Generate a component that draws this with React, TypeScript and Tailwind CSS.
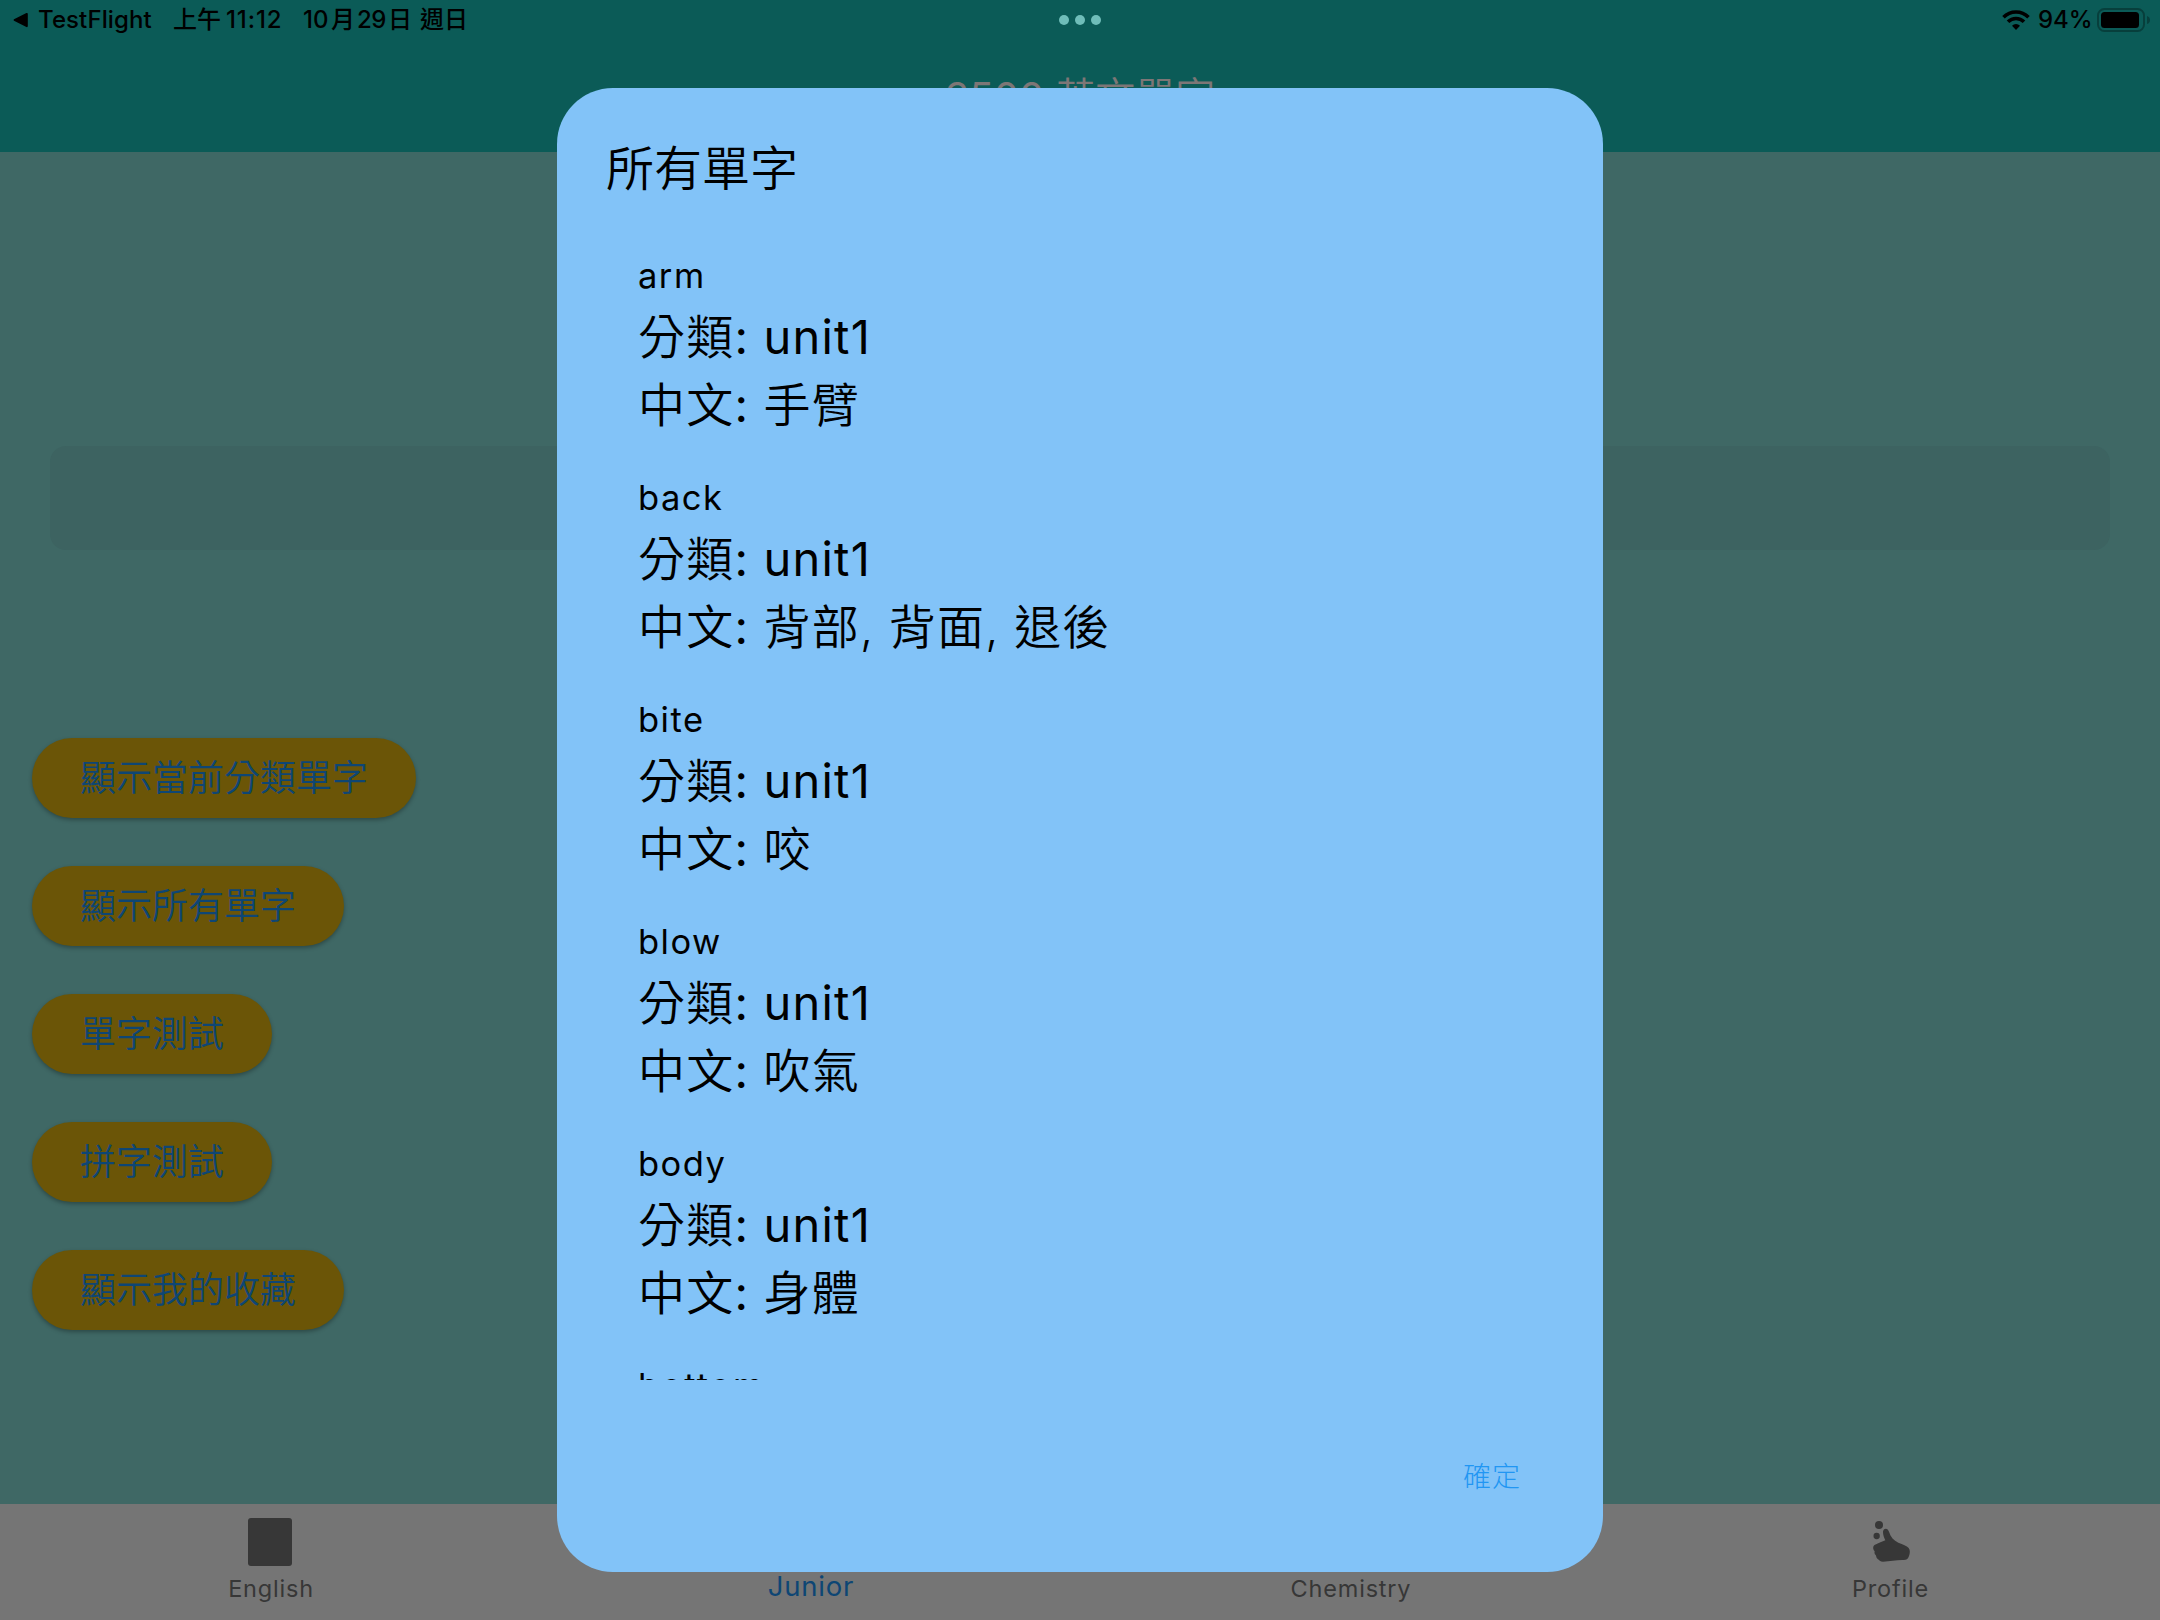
const words = [
  { word: "arm", unit: "unit1", zh: "手臂" },
  { word: "back", unit: "unit1", zh: "背部, 背面, 退後" },
  { word: "bite", unit: "unit1", zh: "咬" },
  { word: "blow", unit: "unit1", zh: "吹氣" },
  { word: "body", unit: "unit1", zh: "身體" },
];

const actions = ["顯示當前分類單字", "顯示所有單字", "單字測試", "拼字測試", "顯示我的收藏"];

function StatusBar() {
  return (
    <div className="flex h-10 items-center justify-between pl-[13px] pr-2 text-2xl font-medium text-black">
      <div className="flex h-10 items-center whitespace-nowrap leading-10">
        <svg className="mr-2.5 h-4 w-[15px]" viewBox="0 0 15 16">
          <path d="M1 7.2 13.4 1q1.4-.5 1.4 1v12q0 1.500-1.400 1L1 8.800q-1-.8 0-1.600Z" />
        </svg>
        <span className="w-[135px] tracking-[0.1px]">TestFlight</span>
        <span className="w-[53px]">上午</span>
        <span className="w-[77px] tracking-[0.9px]">11:12</span>
        <span className="w-[28px]">10</span>
        <span className="w-[26px] text-2xl">月</span>
        <span className="w-[31px] tracking-[-0.5px]">29</span>
        <span className="w-8 text-2xl">日</span>
        <span>週日</span>
      </div>
      <div className="flex h-10 items-center">
        <svg className="mr-2 h-5 w-7" viewBox="0 0 28 20" fill="none" stroke="#000" strokeWidth="3.6">
          <path d="M1.500 7.200a17.500 17.500 0 0 1 25 0" />
          <path d="M6 11.800a11.200 11.200 0 0 1 16 0" />
          <path d="m14 20-4-4.200a5.600 5.600 0 0 1 8 0Z" fill="#000" stroke="none" />
        </svg>
        <span className="w-[59px] font-[450] leading-10">94%</span>
        <svg className="h-6 w-[55px]" viewBox="0 0 55 24">
          <rect x="1" y="1" width="46" height="22" rx="6.500" fill="none" stroke="#073f3c" strokeWidth="2" />
          <rect x="4" y="4" width="38" height="16" rx="3.500" />
          <path d="M50 8q3 1 3 4t-3 4Z" fill="#073f3c" />
        </svg>
      </div>
    </div>
  );
}

function Header() {
  return (
    <header className="relative h-[152px] bg-[#0b5b57]">
      <StatusBar />
      <div className="absolute left-[1059px] top-[15px] flex gap-1.5">
        <i className="size-2.5 rounded-full bg-[#6fbdb9]" />
        <i className="size-2.5 rounded-full bg-[#6fbdb9]" />
        <i className="size-2.5 rounded-full bg-[#6fbdb9]" />
      </div>
      <h1 className="mt-[29px] text-center text-[40px] font-[350] leading-[56px] text-[#7d7676]">
        <span className="font-normal">3500</span> 英文單字
      </h1>
    </header>
  );
}

function ThumbIcon() {
  return (
    <svg className="size-11" viewBox="264 84 132 132" fill="#373737">
      <circle cx="297" cy="105" r="12" />
      <circle cx="290" cy="138" r="9.500" />
      <path d="M309 125q1-9 9-9 6 0 9 9c5 16 14 26 28 33 14 6 25 9 31 16 5 6 4 16 1 24-3 9-8 12-16 12-18-1-40 4-62 5-8 0-12-5-16-8-5-4-4-9-6-12-4-3-4-8-3-12-6-5-6-16 1-19 11-5 22-9 31-13-4-9-7-16-7-26Z" />
    </svg>
  );
}

function TabBar() {
  return (
    <nav className="grid h-[116px] grid-cols-4 bg-[#757575] text-[23.5px] font-[390] tracking-[0.8px] text-[#373737]">
      <div className="flex flex-col items-center pt-3.5">
        <i className="h-12 w-11 rounded-[3px] bg-[#373737]" />
        <span className="mt-[3px] pl-0.5 leading-10">English</span>
      </div>
      <div className="flex flex-col items-center pt-[62px] text-[27.5px] text-[#0e4674]">
        <span className="pl-0.5 leading-10">Junior</span>
      </div>
      <div className="flex flex-col items-center pt-[65px]">
        <span className="pl-0.5 leading-10">Chemistry</span>
      </div>
      <div className="flex flex-col items-center pt-3.5">
        <ThumbIcon />
        <span className="mt-[7px] pl-px leading-10">Profile</span>
      </div>
    </nav>
  );
}

function WordDialog() {
  return (
    <section className="absolute left-[557px] top-[88px] flex h-[1484px] w-[1046px] flex-col rounded-[56px] bg-[#82c3f8] pt-[49px] text-black">
      <h2 className="pl-[49px] text-5xl font-[350] leading-[64px]">所有單字</h2>
      <div className="mt-12 h-[1131px] shrink-0 overflow-hidden pl-[81px]">
        {words.map((w) => (
          <div key={w.word} className="mb-8">
            <p className="text-[34.5px] leading-[54px] tracking-[1.5px]">{w.word}</p>
            <p className="text-[47px] font-[350] leading-[68px] tracking-[1.2px]">
              分類<span className="font-normal">: {w.unit}</span>
            </p>
            <p className="text-[47px] font-[350] leading-[68px] tracking-[1.200px]">
              中文<span className="font-normal">: </span>
              {w.zh}
            </p>
          </div>
        ))}
        <p className="text-[34.5px] leading-[54px] tracking-[2.2px]">bottom</p>
      </div>
      <button className="mr-[82px] mt-[77px] self-end text-[28px] font-light leading-10 tracking-[1px] text-[#2196f3]">
        確定
      </button>
    </section>
  );
}

export default function App() {
  return (
    <div className="relative flex h-[1620px] w-[2160px] flex-col overflow-hidden bg-[#3f6865] font-['Inter','Noto_Sans_CJK_TC',sans-serif]">
      <Header />
      <main className="flex flex-1 flex-col">
        <div className="mx-[50px] mt-[294px] h-[104px] rounded-2xl bg-[#3d6361]" />
        <div className="mt-[188px] flex flex-col items-start gap-12 pl-8">
          {actions.map((a) => (
            <button
              key={a}
              className="h-20 rounded-full bg-[#6b5507] px-12 text-4xl font-[350] text-[#0e4674] shadow-[0_2px_4px_rgba(0,0,0,0.3)]"
            >
              {a}
            </button>
          ))}
        </div>
      </main>
      <TabBar />
      <WordDialog />
    </div>
  );
}
